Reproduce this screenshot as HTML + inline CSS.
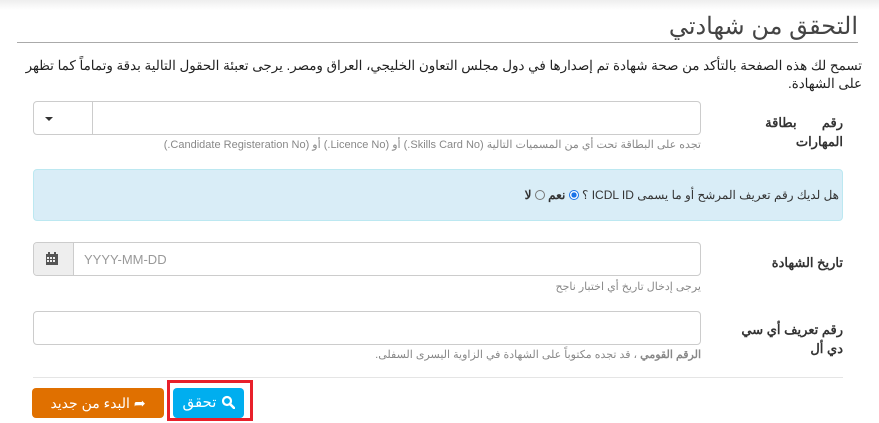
<!DOCTYPE html>
<html><head><meta charset="utf-8"><style>
body{margin:0;width:879px;height:423px;background:#fff;position:relative;overflow:hidden;font-family:"Liberation Sans","Noto Sans CJK SC",sans-serif;color:#333}
.a{position:absolute}
.r{direction:rtl;text-align:right}
.top{left:0;top:0;width:879px;height:10px;background:linear-gradient(#eee,#fff)}
.inp{border:1px solid #ccc;border-radius:4px;background:#fff;box-sizing:border-box}
.hint{font-size:11px;color:#888;white-space:nowrap}
.lbl{font-size:13px;font-weight:bold;color:#333}
</style></head><body>
<div class="a top"></div>
<div class="a r" style="right:21px;top:12px;font-size:24px;color:#444">التحقق من شهادتي</div>
<div class="a" style="left:17px;top:42px;width:841px;height:1px;background:#aaa"></div>
<div class="a r" style="right:17px;top:57px;font-size:13.4px;line-height:18px;color:#222;white-space:nowrap">تسمح لك هذه الصفحة بالتأكد من صحة شهادة تم إصدارها في دول مجلس التعاون الخليجي، العراق ومصر. يرجى تعبئة الحقول التالية بدقة وتماماً كما تظهر<br>على الشهادة.</div>

<div class="a inp" style="left:33px;top:101px;width:668px;height:34px"></div>
<div class="a" style="left:92px;top:102px;width:1px;height:32px;background:#ccc"></div>
<div class="a" style="left:45px;top:117px;width:0;height:0;border-left:4px solid transparent;border-right:4px solid transparent;border-top:4px solid #333"></div>
<div class="a r lbl" style="right:36px;top:113px;width:110px;line-height:19px">رقم &nbsp;&nbsp;&nbsp;&nbsp;&nbsp;&nbsp;بطاقة المهارات</div>
<div class="a r hint" style="right:178px;top:138px">تجده على البطاقة تحت أي من المسميات التالية (Skills Card No.) أو (Licence No.) أو (Candidate Registeration No.)</div>

<div class="a" style="left:33px;top:169px;width:810px;height:52px;background:#d9edf7;border:1px solid #bce8f1;border-radius:4px;box-sizing:border-box"></div>
<div class="a r" style="right:40px;top:188px;font-size:12px;color:#333;white-space:nowrap">هل لديك رقم تعريف المرشح أو ما يسمى ICDL ID ؟ <span style="display:inline-block;width:10px;height:10px;border-radius:50%;border:1px solid #1a73e8;box-sizing:border-box;background:radial-gradient(#1a73e8 45%,#fff 50%);vertical-align:-1px"></span> <b>نعم</b> <span style="display:inline-block;width:10px;height:10px;border-radius:50%;border:1px solid #777;box-sizing:border-box;vertical-align:-1px"></span> <b>لا</b></div>

<div class="a inp" style="left:33px;top:242px;width:668px;height:34px;overflow:hidden"><div style="width:39px;height:100%;background:#eee;border-right:1px solid #ccc"></div></div>
<svg class="a" style="left:46px;top:252px" width="12" height="13" viewBox="0 0 12 13"><rect x="0" y="2" width="12" height="11" fill="#555"/><rect x="2" y="0" width="2" height="3" fill="#555"/><rect x="8" y="0" width="2" height="3" fill="#555"/><g fill="#eee"><rect x="1" y="5" width="2" height="2"/><rect x="4" y="5" width="2" height="2"/><rect x="7" y="5" width="2" height="2"/><rect x="1" y="8" width="2" height="2"/><rect x="4" y="8" width="2" height="2"/><rect x="7" y="8" width="2" height="2"/></g></svg>
<div class="a" style="left:84px;top:252px;font-size:13px;color:#999">YYYY-MM-DD</div>
<div class="a r lbl" style="right:36px;top:255px">تاريخ الشهادة</div>
<div class="a r hint" style="right:178px;top:280px">يرجى إدخال تاريخ أي اختبار ناجح</div>

<div class="a inp" style="left:33px;top:311px;width:668px;height:34px"></div>
<div class="a r lbl" style="right:36px;top:320px;width:120px;line-height:19px">رقم تعريف أي سي<br>دي أل</div>
<div class="a r hint" style="right:178px;top:348px"><b>الرقم القومي</b> ، قد تجده مكتوباً على الشهادة في الزاوية اليسرى السفلى.</div>

<div class="a" style="left:33px;top:377px;width:810px;height:1px;background:#e5e5e5"></div>
<div class="a r" style="left:32px;top:388px;width:132px;height:30px;background:#e07000;border-radius:4px;color:#fff;font-size:14px;line-height:30px;text-align:center">➦ البدء من جديد</div>
<div class="a" style="left:167px;top:380px;width:86px;height:41px;border:3px solid #e8202a;box-sizing:border-box"></div>
<div class="a r" style="left:173px;top:388px;width:71px;height:30px;background:#00aeef;border-radius:4px;color:#fff;font-size:15px;line-height:30px;text-align:center"><svg width="14" height="14" viewBox="0 0 14 14" style="vertical-align:-2px"><circle cx="6" cy="6" r="4" fill="none" stroke="#fff" stroke-width="2.2"/><line x1="9" y1="9" x2="13" y2="13" stroke="#fff" stroke-width="2.6" stroke-linecap="round"/></svg> تحقق</div>
</body></html>
